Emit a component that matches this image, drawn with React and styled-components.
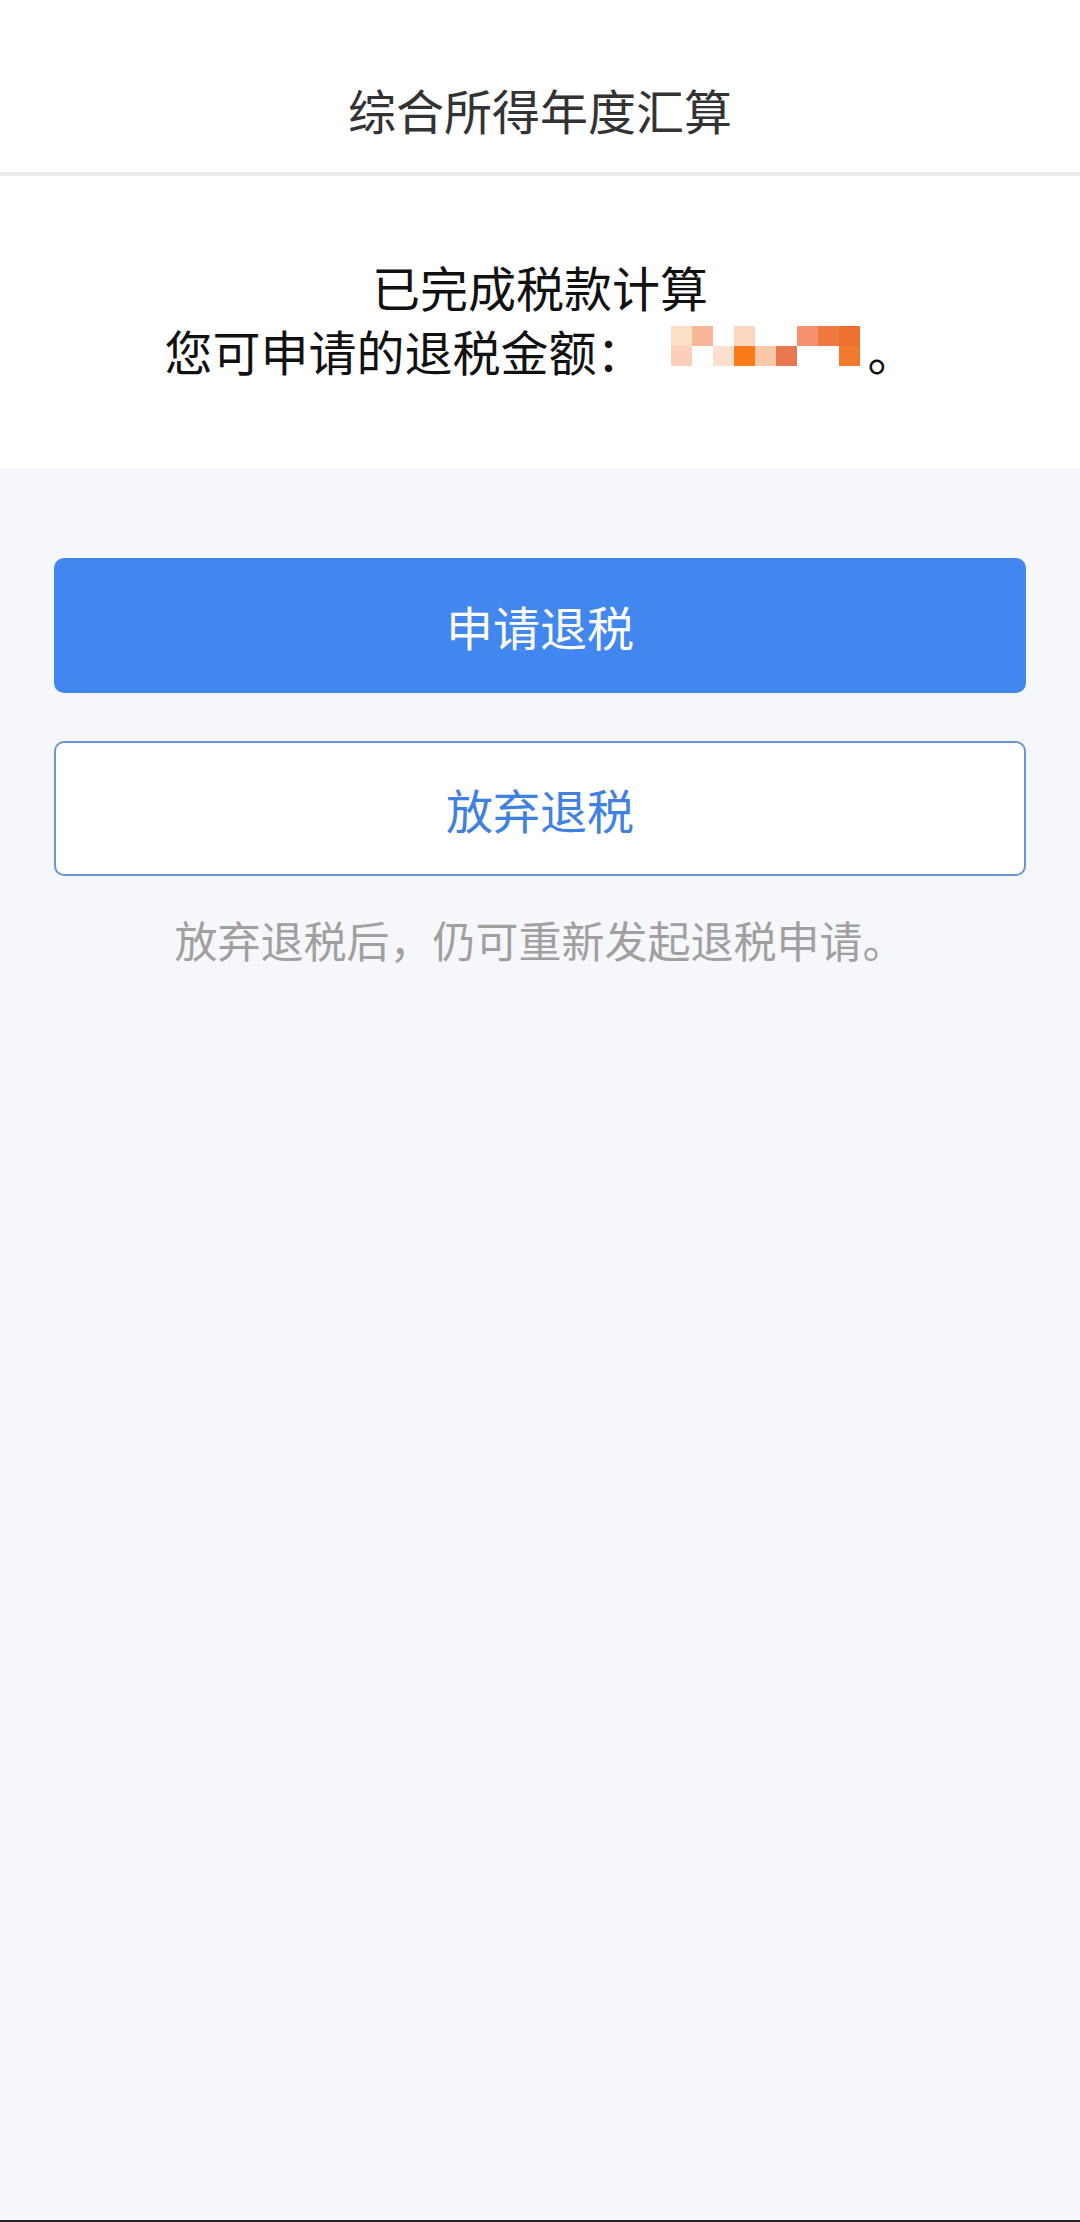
import React from 'react';
import styled, { createGlobalStyle } from 'styled-components';

const GlobalStyle = createGlobalStyle`
  html, body {
    margin: 0;
    padding: 0;
    background: #f6f7fb;
  }
  body {
    font-family: "Noto Sans CJK SC", "Noto Sans", sans-serif;
  }
`;

const Page = styled.div`
  min-height: 2222px;
  display: flex;
  flex-direction: column;
  background: #f6f7fb;
`;

const Header = styled.div`
  height: 176px;
  box-sizing: border-box;
  padding-top: 46px;
  display: flex;
  align-items: center;
  justify-content: center;
  background: #fff;
  border-bottom: 4px solid #ebebeb;
  font-size: 48px;
  color: #333;
`;

const Result = styled.div`
  background: #fff;
  padding: 78px 0 86px;
  text-align: center;
  font-size: 48px;
  line-height: 64px;
  color: #111;
`;

const Line = styled.div`
  white-space: nowrap;
`;

// blurred-out amount
const Mosaic = styled.span`
  display: inline-grid;
  grid-template-columns: repeat(9, 21px);
  grid-template-rows: 20px 20px;
  margin: -24px 8px 0 26px;
  vertical-align: 25px;
`;

const Cell = styled.span`
  background: ${(p) => p.color};
`;

const Body = styled.div`
  flex: 1;
  padding: 90px 54px 0;
  display: flex;
  flex-direction: column;
`;

const Button = styled.div`
  height: 135px;
  box-sizing: border-box;
  border-radius: 10px;
  display: flex;
  align-items: center;
  justify-content: center;
  font-size: 47px;
  background: ${(p) => (p.primary ? '#4286f0' : '#fff')};
  color: ${(p) => (p.primary ? '#fff' : '#3f80e3')};
  border: ${(p) => (p.primary ? 'none' : '2px solid #6b93d6')};
  margin-bottom: ${(p) => p.gap || 0}px;
`;

const Hint = styled.div`
  text-align: center;
  font-size: 43px;
  line-height: 57px;
  color: #a0a0a0;
`;

const BottomBar = styled.div`
  height: 2px;
  background: #222;
`;

const mosaic = [
  '#fde0c8', '#f8b898', '#fff', '#fcd8c0', '#fff', '#fff', '#f59070', '#ee7a40', '#ee7030',
  '#fcd0b8', '#fff', '#fbe0d0', '#fb7a1a', '#f8c8a8', '#e87850', '#fff', '#fff', '#f07a30',
];

export default function App() {
  return (
    <Page>
      <GlobalStyle />
      <Header>综合所得年度汇算</Header>
      <Result>
        <Line>已完成税款计算</Line>
        <Line>
          您可申请的退税金额：
          <Mosaic>
            {mosaic.map((c, i) => (
              <Cell key={i} color={c} />
            ))}
          </Mosaic>
          。
        </Line>
      </Result>
      <Body>
        <Button primary gap={48}>申请退税</Button>
        <Button gap={35}>放弃退税</Button>
        <Hint>放弃退税后，仍可重新发起退税申请。</Hint>
      </Body>
      <BottomBar />
    </Page>
  );
}
